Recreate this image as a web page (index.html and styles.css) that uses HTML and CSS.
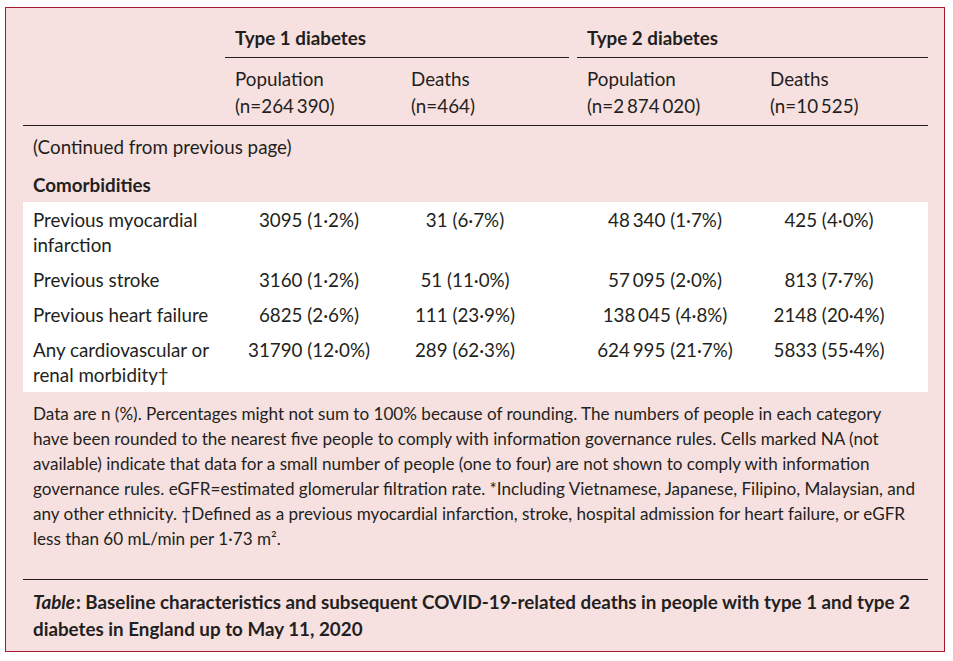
FILE: index.html
```html
<!DOCTYPE html>
<html lang="en">
<head>
<meta charset="utf-8">
<title>Baseline characteristics table</title>
<link rel="stylesheet" href="styles.css">
</head>
<body>
<div class="panel">
  <table class="data">
    <colgroup>
      <col class="c0"><col class="c1"><col class="c2"><col class="c3"><col class="c4">
    </colgroup>
    <thead>
      <tr class="group">
        <th></th>
        <th colspan="2"><div class="grp grp-first">Type 1 diabetes</div></th>
        <th colspan="2"><div class="grp">Type 2 diabetes</div></th>
      </tr>
      <tr class="sub">
        <th></th>
        <th>Population<br>(n=<span class="n">264&nbsp;390</span>)</th>
        <th>Deaths<br>(n=464)</th>
        <th>Population<br>(n=<span class="n">2&nbsp;874&nbsp;020</span>)</th>
        <th>Deaths<br>(n=<span class="n">10&nbsp;525</span>)</th>
      </tr>
    </thead>
    <tbody class="intro">
      <tr><td colspan="5" class="cont">(Continued from previous page)</td></tr>
      <tr><td colspan="5" class="section">Comorbidities</td></tr>
    </tbody>
    <tbody class="rows">
      <tr>
        <td class="label">Previous myocardial infarction</td>
        <td class="v1">3095 (1·2%)</td>
        <td class="v2">31 (6·7%)</td>
        <td class="v3"><span class="n">48&nbsp;340</span> (1·7%)</td>
        <td class="v4">425 (4·0%)</td>
      </tr>
      <tr>
        <td class="label">Previous stroke</td>
        <td class="v1">3160 (1·2%)</td>
        <td class="v2">51 (11·0%)</td>
        <td class="v3"><span class="n">57&nbsp;095</span> (2·0%)</td>
        <td class="v4">813 (7·7%)</td>
      </tr>
      <tr>
        <td class="label">Previous heart failure</td>
        <td class="v1">6825 (2·6%)</td>
        <td class="v2">111 (23·9%)</td>
        <td class="v3"><span class="n">138&nbsp;045</span> (4·8%)</td>
        <td class="v4">2148 (20·4%)</td>
      </tr>
      <tr>
        <td class="label">Any cardiovascular or renal morbidity†</td>
        <td class="v1">31790 (12·0%)</td>
        <td class="v2">289 (62·3%)</td>
        <td class="v3"><span class="n">624&nbsp;995</span> (21·7%)</td>
        <td class="v4">5833 (55·4%)</td>
      </tr>
    </tbody>
  </table>
  <p class="notes">Data are n (%). Percentages might not sum to 100% because of rounding. The numbers of people in each category<br>
have been rounded to the nearest five people to comply with information governance rules. Cells marked NA (not<br>
available) indicate that data for a small number of people (one to four) are not shown to comply with information<br>
governance rules. eGFR=estimated glomerular filtration rate. *Including Vietnamese, Japanese, Filipino, Malaysian, and<br>
any other ethnicity. †Defined as a previous myocardial infarction, stroke, hospital admission for heart failure, or eGFR<br>
less than 60 mL/min per 1·73 m².</p>
  <p class="caption"><em>Table</em>: Baseline characteristics and subsequent COVID-19-related deaths in people with type 1 and type 2 diabetes in England up to May 11, 2020</p>
</div>
</body>
</html>
```

FILE: styles.css
```css
html, body {
  margin: 0;
  padding: 0;
  background: #ffffff;
}

body {
  font-family: Lato, "Liberation Sans", sans-serif;
  font-size: 17.1px;
  color: #231f20;
}

.panel {
  box-sizing: border-box;
  margin: 7px 0 0 5px;
  width: 940px;
  height: 645px;
  border: 1px solid #a6192e;
  background: #f7e1e0;
  padding: 0 16px 0 17px;
}

.data {
  width: 905px;
  table-layout: fixed;
  border-collapse: separate;
  border-spacing: 0;
  font-size: 18.8px;
  line-height: 25px;
}

.c0 { width: 202px; }
.c1 { width: 176px; }
.c2 { width: 176px; }
.c3 { width: 183px; }
.c4 { width: 168px; }

.data th,
.data td {
  padding: 0;
  vertical-align: top;
  text-align: left;
}

.n {
  word-spacing: -2px;
}

.data .group th {
  padding-top: 17px;
  font-weight: 700;
}

.grp {
  padding: 0 0 7px 10px;
  border-bottom: 1px solid #231f20;
}

.grp-first {
  margin-right: 8px;
}

.data .sub th {
  font-weight: 400;
  line-height: 27px;
  padding: 7px 0 6px 10px;
  border-bottom: 1px solid #231f20;
}

.data .sub th:first-child {
  padding-left: 0;
}

.data .cont {
  padding: 8px 0 0 10px;
}

.data .section {
  padding: 13px 0 5px 10px;
  font-weight: 700;
}

.data .rows td {
  background: #ffffff;
  padding-top: 5px;
  padding-bottom: 5px;
}

.data .rows .label {
  padding-left: 10px;
  padding-right: 8px;
}

.data .rows .v1 { text-align: center; padding-right: 8px; }
.data .rows .v2 { text-align: center; padding-right: 48px; }
.data .rows .v3 { text-align: center; padding-right: 7px; }
.data .rows .v4 { text-align: center; padding-right: 30px; }

.notes {
  margin: 0;
  padding: 9px 0 28px 10px;
  line-height: 25px;
  white-space: nowrap;
  border-bottom: 1px solid #231f20;
}

.caption {
  margin: 0;
  padding: 8px 0 0 10px;
  font-size: 18.8px;
  line-height: 27px;
  font-weight: 700;
}

.caption em {
  padding-right: 1px;
}
```
